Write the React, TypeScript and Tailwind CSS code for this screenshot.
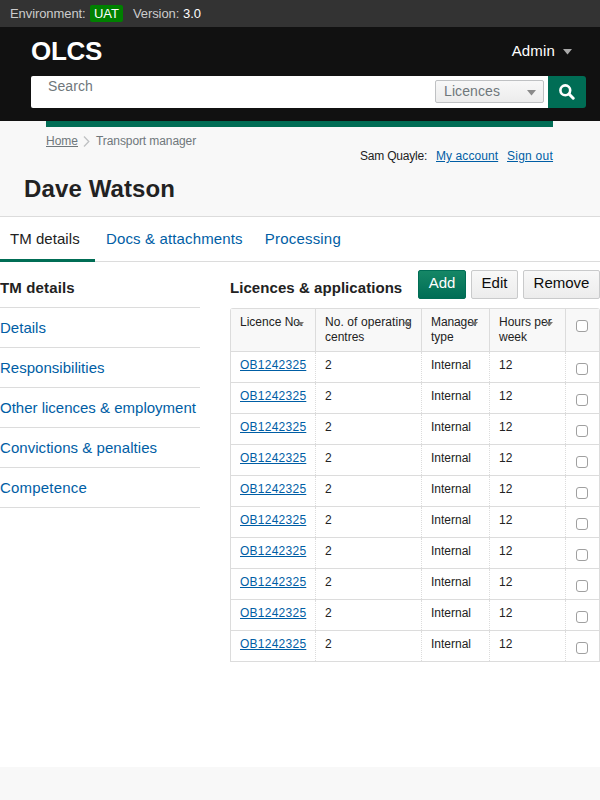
import React from "react";

const nav = [
  { label: "Details", spacing: "tracking-[0.02px]" },
  { label: "Responsibilities", spacing: "tracking-[0.02px]" },
  { label: "Other licences & employment", spacing: "tracking-[0px]" },
  { label: "Convictions & penalties", spacing: "tracking-[0.05px]" },
  { label: "Competence", spacing: "tracking-[0.2px]" },
];
const rows = Array.from({ length: 10 }, (_, i) => i);

function Check({ className }: { className: string }) {
  return <input type="checkbox" className={`block size-3 appearance-none rounded-[3px] border border-[#a0a0a0] bg-white ${className}`} />;
}

function SortIcon({ className }: { className: string }) {
  return (
    <svg className={`absolute h-[5px] w-[8px] ${className}`} viewBox="0 0 8 5">
      <path d="M0 1h8L4.500 5z" fill="#777" />
    </svg>
  );
}

function Caret({ className }: { className: string }) {
  return (
    <svg className={`h-[6px] w-[9px] ${className}`} viewBox="0 0 9 6">
      <path d="M0 0h9L4.500 5.500z" fill="currentColor" />
    </svg>
  );
}

export default function App() {
  return (
    <div className="flex h-[800px] w-[600px] flex-col overflow-hidden bg-[#f8f8f8] font-['Liberation_Sans',Arial,sans-serif] text-[#222]">
      <div className="flex h-[27px] items-center bg-[#333] pl-[10px] text-[13px] leading-[17px] text-[#ccc]">
        <span className="w-[80px] tracking-[-0.08px]">Environment:</span>
        <span className="flex h-[17px] w-[33px] items-center justify-center rounded-[2px] bg-[#008000] text-white">UAT</span>
        <span className="ml-[10px] w-[50px] tracking-[-0.1px]">Version:</span>
        <span className="text-white">3.0</span>
      </div>

      <header className="h-[94px] bg-[#111] pl-[31px]">
        <div className="flex h-[49px] items-center justify-between pr-[28px] text-white">
          <span className="-mt-[2px] text-[26px] leading-[30px] font-bold tracking-[-0.3px]">OLCS</span>
          <span className="flex items-center text-[15px] tracking-[0.15px]">
            Admin
            <Caret className="mt-[1px] ml-[8px] text-[#aaa]" />
          </span>
        </div>
        <div className="flex h-8 w-[555px]">
          <div className="flex w-[517px] items-start justify-between rounded-l-[2px] bg-white pt-1 pr-1 pl-[17px] text-[#6f777b]">
            <span className="-mt-[1px] text-[14px] leading-[14px] tracking-[0.1px]">Search</span>
            <div className="flex h-[23px] w-[109px] items-center justify-between rounded-[2px] border border-[#bfc1c3] bg-linear-to-b from-[#f8f8f8] to-[#ececec] px-[8px] text-[14px] leading-[20px] tracking-[0.1px]">
              <span className="-mt-[1px]">Licences</span>
              <Caret className="mt-[3px] -mr-[1px] text-[#8a8a8a]" />
            </div>
          </div>
          <button className="flex w-[38px] items-center justify-center rounded-r-[3px] bg-[#006d55]">
            <svg className="-mt-[1px] h-4 w-4" viewBox="0 0 16 16" fill="none" stroke="white">
              <circle cx="6.300" cy="6.300" r="4.900" strokeWidth="2.600" />
              <path d="M10 10L14.200 14.200" strokeWidth="3" strokeLinecap="round" />
            </svg>
          </button>
        </div>
      </header>

      <section className="h-[96px] border-b border-[#dcdcdc]">
        <div className="mx-[46px] h-[6px] w-[507px] bg-[#006d55]" />
        <div className="mt-[6px] ml-[46px] flex h-[16px] items-center text-[12px] text-[#6f777b]">
          <a className="underline">Home</a>
          <svg className="mx-[5px] h-[11px] w-[7px]" viewBox="0 0 7 11" fill="none" stroke="#bfc1c3" strokeWidth="1.300">
            <path d="M1 .5L5.800 5.500L1 10.500" />
          </svg>
          <span className="ml-[1px] tracking-[-0.09px]">Transport manager</span>
        </div>
        <div className="mr-[47px] -mt-[1px] flex h-[16px] items-center justify-end text-[12px] whitespace-nowrap text-[#222]">
          <span className="w-[76px] tracking-[-0.2px]">Sam Quayle:</span>
          <a className="w-[71px] tracking-[0.08px] text-[#005ea5] underline">My account</a>
          <a className="w-[46px] tracking-[0.25px] text-[#005ea5] underline">Sign out</a>
        </div>
        <h1 className="mt-[11px] ml-[24px] text-[24px] leading-[28px] font-bold tracking-[0.12px]">Dave Watson</h1>
      </section>

      <nav className="flex h-[45px] shrink-0 border-b border-[#dcdcdc] bg-white text-[15px] leading-[44px] text-[#005ea5]">
        <a className="h-[45px] w-[95px] border-b-[3px] border-[#006d55] pl-[10px] tracking-[0.05px] text-[#222]">TM details</a>
        <a className="ml-[11px] tracking-[0.14px]">Docs &amp; attachments</a>
        <a className="ml-[22px] tracking-[0.2px]">Processing</a>
      </nav>

      <main className="flex h-[505px] gap-[30px] bg-white">
        <aside className="w-[200px] text-[15px] text-[#005ea5]">
          <h3 className="h-[46px] border-b border-[#dcdcdc] pt-[16px] leading-[20px] font-bold tracking-[0.15px] text-[#222]">TM details</h3>
          {nav.map((t) => (
            <a key={t.label} className={`block h-[40px] border-b border-[#dcdcdc] leading-[40px] whitespace-nowrap ${t.spacing}`}>{t.label}</a>
          ))}
        </aside>
        <div className="w-[370px]">
          <div className="flex h-[46px] pt-[8px] text-[15px] leading-[24px] text-[#0b0c0c]">
            <h3 className="w-[188px] pt-[6px] font-bold tracking-[0.06px] whitespace-nowrap text-[#222]">Licences &amp; applications</h3>
            <button className="h-[29px] w-[48px] rounded-[2px] border border-[#006d55] bg-linear-to-b from-[#158766] to-[#006d55] pb-[3px] text-white">Add</button>
            <button className="ml-[5px] h-[29px] w-[47px] rounded-[2px] border border-[#c9cacb] bg-linear-to-b from-[#f8f8f8] to-[#ececec] pb-[3px]">Edit</button>
            <button className="ml-[5px] h-[29px] w-[77px] rounded-[2px] border border-[#c9cacb] bg-linear-to-b from-[#f8f8f8] to-[#ececec] pb-[3px]">Remove</button>
          </div>
          <div className="rounded-t-[3px] border-x border-t border-[#dcdcdc] text-[12px] leading-[15px]">
            <div className="grid h-[43px] grid-cols-[85px_106px_68px_76px_33px] border-b border-[#dcdcdc] bg-[#f8f8f8] *:relative *:border-[#dcdcdc] *:pt-[6px] *:pl-[9px] *:not-last:border-r">
              <div>Licence No.<SortIcon className="top-[12px] right-[11px]" /></div>
              <div><span className="tracking-[0.08px]">No. of operating</span><br />centres<SortIcon className="top-[12px] right-[10px]" /></div>
              <div><span className="tracking-[-0.1px]">Manager</span><br />type<SortIcon className="top-[12px] right-[11px]" /></div>
              <div>Hours per<br />week<SortIcon className="top-[12px] right-[12px]" /></div>
              <div><Check className="mt-[5px] ml-[1px]" /></div>
            </div>
            {rows.map((r) => (
              <div key={r} className="grid h-[31px] grid-cols-[85px_106px_68px_76px_33px] border-b border-[#dcdcdc] *:border-dotted *:border-[#dcdcdc] *:pt-[6px] *:pl-[9px] *:not-last:border-r">
                <div><a className="tracking-[0.25px] text-[#005ea5] underline">OB1242325</a></div>
                <div>2</div>
                <div>Internal</div>
                <div>12</div>
                <div><Check className="mt-[5px] ml-[1px]" /></div>
              </div>
            ))}
          </div>
        </div>
      </main>
    </div>
  );
}
